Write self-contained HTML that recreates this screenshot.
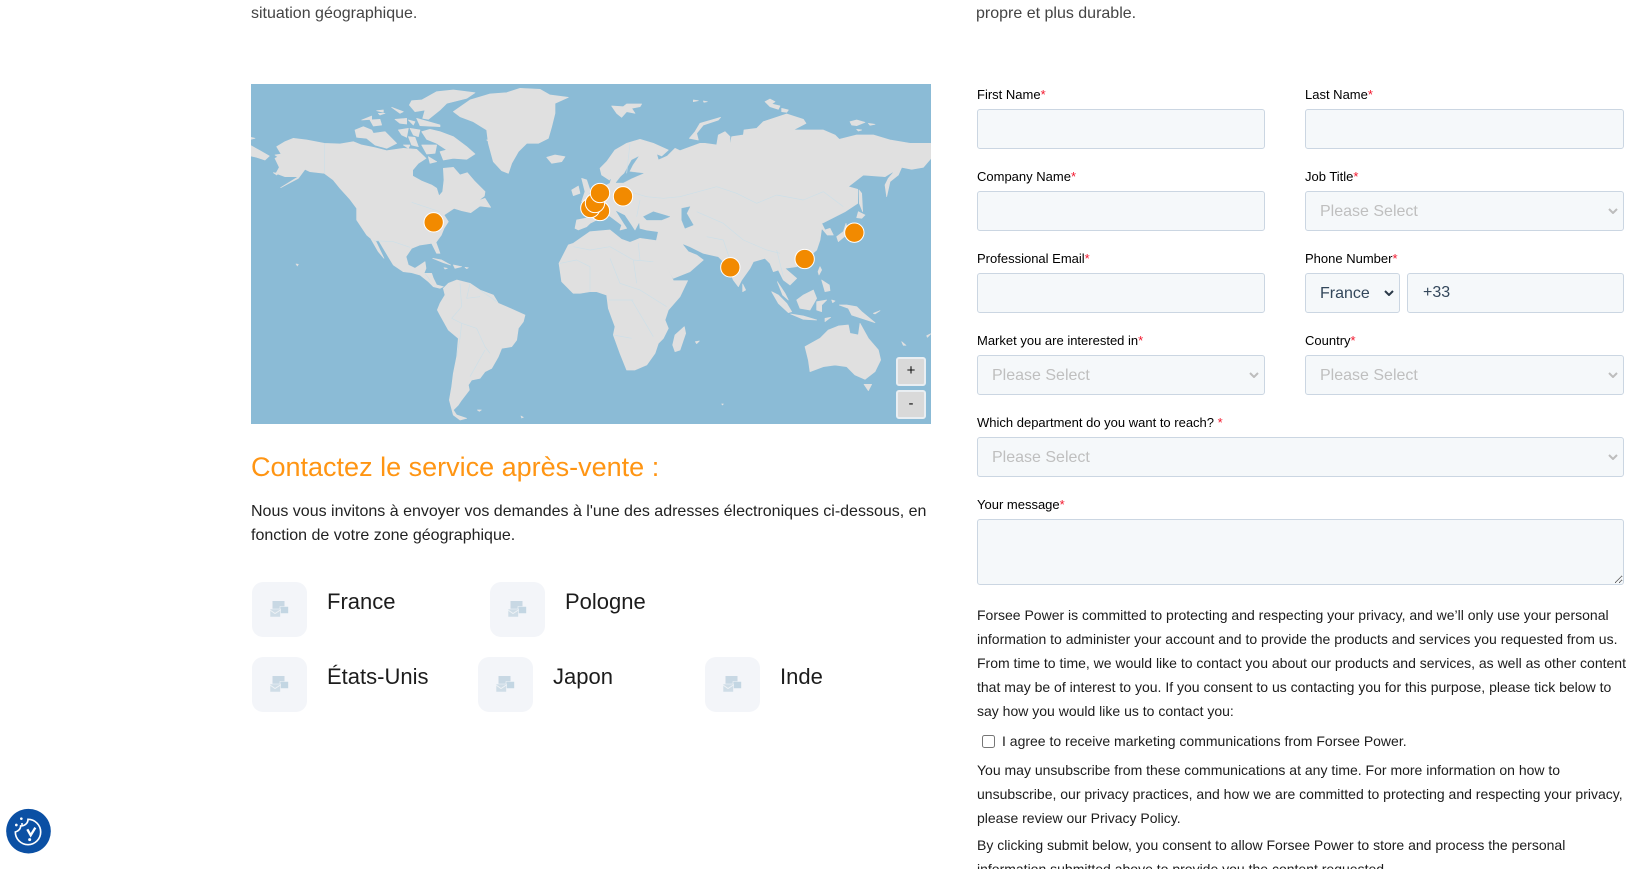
<!DOCTYPE html>
<html lang="fr">
<head>
<meta charset="utf-8">
<title>Contact</title>
<style>
html{margin:0;padding:0;background:#fff;width:1637px;height:869px;overflow:hidden}
body{margin:0;padding:0;background:#fff;position:relative;width:1637px;height:869px;overflow:hidden;font-family:"Liberation Sans",Arial,sans-serif;color:#222}
.t{position:absolute;white-space:nowrap}
.b{position:absolute;font-size:16px;line-height:24px;color:#222}
.lab{position:absolute;font-size:13px;line-height:16px;color:#000;white-space:nowrap}
.lab i{font-style:normal;color:#f2162c}
.f{position:absolute;box-sizing:border-box;height:40px;margin:0;background:#f5f8fa;border:1px solid #cbd6e2;border-radius:3px;font:16px "Liberation Sans",Arial,sans-serif;color:#33475b;padding:0 15px;outline:0}
select.f{color:#bfbfbf;padding:0 14px;-webkit-appearance:none;appearance:none}
select.dark{color:#33475b}
.ch{position:absolute;width:10px;height:6px}
.box{position:absolute;width:55px;height:55px;background:#f3f5f9;border-radius:11px}
.box svg{position:absolute;left:18px;top:19px}
.city{position:absolute;font-size:22px;line-height:28px;color:#1c1c1c;white-space:nowrap}
.p{position:absolute;left:977px;font-size:14px;line-height:24px;color:#1c1c1c;white-space:nowrap}
.zb{position:absolute;left:896px;width:30px;height:29px;box-sizing:border-box;background:#d9d9d9;border:2px solid #e9eef2;border-radius:3px;text-align:center;font-size:15px;line-height:24px;color:#111}
</style>
</head>
<body>
<div class="t" style="left:251px;top:2px;font-size:16px;line-height:24px;color:#444">situation géographique.</div>
<div class="t" style="left:976px;top:2px;font-size:16px;line-height:24px;color:#444">propre et plus durable.</div>

<svg style="position:absolute;left:240px;top:80px" width="700" height="360" viewBox="0 0 2100 1080">
<defs><clipPath id="c"><rect x="33" y="12" width="2040" height="1020"/></clipPath></defs>
<rect x="33" y="12" width="2040" height="1020" fill="#8bbbd6"/>
<g clip-path="url(#c)" fill="#e0e0e0" stroke="#e0e0e0" stroke-width="2" stroke-linejoin="round">
<!-- North America -->
<path d="M110 200L135 185L160 175L200 180L253 190L300 192L340 185L365 195L405 203L440 212L490 205L530 208L558 235L535 250L518 270L518 288L545 303L575 315L590 325L597 348L608 335L612 300L610 265L640 262L660 285L682 278L705 305L735 335L733 348L715 362L735 355L752 382L720 378L692 398L665 392L642 385L612 405L625 425L612 445L604 465L588 487L600 520L590 520L575 490L540 495L515 505L498 530L505 555L525 565L540 555L555 545L558 565L552 580L575 580L580 595L590 615L610 620L600 625L580 620L565 605L540 585L515 578L490 575L460 555L445 530L415 480L400 482L380 465L350 420L350 385L330 358L300 325L280 300L253 280L210 275L195 268L175 295L122 323L175 290L135 290L108 280L118 262L105 235L125 225Z"/>
<path d="M393 477L408 485L432 535L415 515Z"/>
<!-- Arctic Canada -->
<path d="M545 60L590 35L640 30L705 38L680 55L620 70L600 90L565 118L548 115L555 90L525 95L508 75L515 62Z"/>
<path d="M545 155L570 148L600 155L640 170L680 200L705 222L680 238L640 235L610 240L600 215L620 210L590 190L560 178Z"/>
<path d="M345 150L370 140L395 150L400 160L435 155L470 190L440 205L405 195L380 175L350 172Z"/>
<path d="M390 120L420 118L425 135L400 138ZM365 120L395 108L395 118ZM410 92L430 90L430 97ZM415 100L435 100L420 105ZM455 82L490 95L480 100ZM465 118L500 115L500 132L480 130ZM505 120L525 125L520 135ZM530 115L600 135L600 140L540 137ZM475 150L505 145L500 172L485 165ZM510 145L540 150L535 170L520 165ZM505 170L525 172L535 200L515 195ZM490 195L510 195L505 205ZM565 230L590 245L570 250ZM545 195L590 195L585 220L560 222ZM740 180L765 180L760 195ZM33 197L60 212L88 228L75 240L50 232L33 228ZM33 172L45 175L33 178ZM105 225L125 222L120 235ZM100 278L115 280L110 285Z"/>
<!-- Greenland / Iceland -->
<path d="M640 95L690 60L750 42L800 38L840 25L900 28L930 45L985 52L945 70L945 100L935 140L925 175L895 190L860 190L835 215L815 250L805 280L785 272L760 245L745 190L740 150L700 125L660 110Z"/>
<path d="M920 232L945 225L975 230L965 245L935 250Z"/>
<path d="M995 330L1015 318L1020 340L1000 347Z"/>
<path d="M1025 295L1040 300L1050 330L1045 360L1025 365L1035 335Z"/>
<!-- Caribbean -->
<path d="M578 535L605 540L632 555L610 548ZM640 555L665 560L645 565ZM612 563L622 565L615 567ZM675 562L685 563L680 566Z"/>
<!-- South America -->
<g transform="translate(0,480)">
<path d="M610 145L625 130L650 120L690 130L720 150L760 165L775 190L810 205L855 225L850 245L835 265L830 300L815 320L785 325L775 350L755 385L735 395L720 415L695 420L685 435L688 450L665 480L655 495L640 510L650 525L680 535L660 540L640 525L628 480L635 440L640 400L650 350L655 295L625 270L600 225L592 210L600 190L615 165Z"/>
<path d="M712 510L724 510L718 514ZM843 528L850 532L845 534ZM168 72L175 73L172 78Z"/>
</g>
<!-- Africa -->
<path d="M1050 455L1110 450L1145 478L1170 487L1200 475L1250 482L1245 497L1295 590L1300 602L1343 602L1320 650L1285 690L1275 720L1285 745L1270 775L1255 790L1245 820L1220 855L1185 870L1160 870L1140 820L1120 765L1125 740L1105 685L1100 645L1070 635L1050 635L1020 640L1000 640L965 605L957 550L985 495L1000 490Z"/>
<path d="M1333 740L1337 760L1320 810L1305 815L1298 795L1305 765Z"/>
<!-- Eurasia -->
<g transform="translate(1050,0)">
<path d="M-45 445L-40 420L0 412L-5 385L10 340L40 320L60 310L65 292L58 300L35 285L30 265L50 245L75 210L110 190L150 178L190 190L235 210L215 228L200 222L205 240L232 228L255 205L270 212L330 190L345 190L380 195L385 165L405 155L420 170L418 215L400 222L420 195L425 170L460 165L462 150L500 145L520 125L590 102L640 118L648 130L610 150L700 150L735 165L748 178L800 165L850 165L900 180L960 190L1023 190L1023 235L1000 262L965 268L935 262L925 285L900 305L890 350L885 315L895 295L915 272L885 290L820 285L775 320L803 328L803 370L765 395L700 428L670 440L695 430L705 450L720 445L730 465L712 465L695 445L690 480L680 510L640 545L620 560L585 565L620 595L600 615L580 600L565 570L550 575L540 550L525 535L490 545L480 565L455 600L445 620L430 600L410 555L385 530L340 520L300 500L275 490L295 515L320 525L340 540L300 575L250 595L195 500L205 455L170 450L150 445L148 425L135 450L122 430L105 405L75 390L100 430L110 445L90 450L95 435L55 405L30 415L0 430L-10 440L-35 450Z"/>
<path d="M160 410L190 395L240 410L215 420L170 420Z" fill="#8bbbd6" stroke="#8bbbd6" stroke-width="1"/>
<path d="M275 385L300 380L290 400L310 435L285 445L275 420Z" fill="#8bbbd6" stroke="#8bbbd6" stroke-width="1"/>
<path d="M103 280L125 240L145 230L128 255L118 275L160 280L125 295L100 308L78 308L92 290Z" fill="#8bbbd6" stroke="#8bbbd6" stroke-width="1"/>
<path d="M298 175L315 155L330 130L392 112L385 120L340 135L320 160L325 180Z"/>
<path d="M65 78L100 80L110 72L155 72L150 80L125 85L135 100L110 95L95 112L80 100Z"/>
<path d="M310 60L325 62L310 65ZM340 63L352 65L342 67ZM525 65L540 57L555 65L545 72L570 78L565 88L540 80ZM575 85L595 90L590 97L575 95ZM780 125L800 120L825 127L800 137L785 135ZM835 130L855 133L840 136ZM800 148L815 150L805 153Z"/>
<path d="M807 330L815 340L818 395L808 370ZM805 395L825 405L815 415L800 413ZM768 430L775 460L745 485L740 470L760 455Z"/>
</g>
<!-- Asia-Pacific -->
<g transform="translate(1050,480)">
<path d="M458 132L467 150L458 155Z"/>
<path d="M562 125L585 160L595 180L578 165Z"/>
<path d="M545 155L565 165L590 190L605 215L595 218L565 190Z"/>
<path d="M620 180L640 165L670 150L680 175L660 210L630 205Z"/>
<path d="M602 222L640 228L680 240L640 238Z"/>
<path d="M680 185L710 180L695 195L695 215L680 210Z"/>
<path d="M748 195L770 195L800 200L815 215L855 248L815 235L785 225L775 205Z"/>
<path d="M645 320L690 295L715 270L745 258L775 255L780 280L805 285L810 250L835 295L865 330L872 360L855 395L825 418L795 405L770 380L735 375L700 380L660 395L655 360Z"/>
<path d="M822 433L845 433L835 452Z"/>
<path d="M690 80L695 90L687 105L684 95ZM695 120L718 135L720 152L705 155ZM725 180L735 183L728 188ZM705 235L722 232L705 245ZM850 220L870 212L855 222ZM935 305L948 316L940 316ZM1010 287L1023 281L1012 292ZM316 305L328 303L320 311ZM395 492L400 492L398 495Z"/>
</g>
<!-- Borders -->
<g fill="none" stroke="#cddfe8" stroke-width="2">
<path d="M253 190V280M515 367L600 395M400 482L460 485L510 502M555 580L570 600"/>
<g transform="translate(0,480)">
<path d="M660 130L665 200L635 235L665 250L710 265L735 320L750 340M665 250L660 295L650 350M690 130L680 175L720 170M735 330L690 410M770 185L720 150"/>
</g>
<g transform="translate(1050,0)">
<path d="M270 350L380 320L440 340L500 370L560 345L640 360L700 335L760 380M320 395L400 430L460 480L530 510L570 520M350 470L400 480L420 540M120 190L110 280M100 330L170 350L220 355L270 350M150 360L140 410"/>
</g>
<g transform="translate(1050,480)">
<path d="M0 30L60 20L130 60L190 65M60 55L90 130L150 150L230 200M55 180L130 180M125 295L70 285M125 180L190 290M145 10L150 60M-90 70L-40 60L0 80L0 155M-50 20L0 30M560 30L580 110M130 60L140 130"/>
</g>
</g>
<!-- Markers -->
<g fill="#f28a00" stroke="#fff" stroke-width="3">
<circle cx="581" cy="427" r="29"/>
<circle cx="1149" cy="349" r="29"/>
<circle cx="1080" cy="393" r="29"/>
<circle cx="1051" cy="384" r="29"/>
<circle cx="1065" cy="369" r="29"/>
<circle cx="1080" cy="339" r="29"/>
<circle cx="1471" cy="562" r="29"/>
<circle cx="1694" cy="537" r="29"/>
<circle cx="1843" cy="458" r="29"/>
</g>
</g>
</svg>
<div class="zb" style="top:357px">+</div>
<div class="zb" style="top:390px">-</div>

<div class="t" style="left:251px;top:449px;font-size:27px;line-height:36px;color:#ff9513">Contactez le service après-vente :</div>
<div class="b" style="left:251px;top:500px;white-space:nowrap">Nous vous invitons à envoyer vos demandes à l'une des adresses électroniques ci-dessous, en<br>fonction de votre zone géographique.</div>

<div class="box" style="left:252px;top:582px"><svg width="19" height="16" viewBox="0 0 19 16"><path d="M2.5 0h12v12h-12z" fill="#c8d8e4"/><path d="M10 5.5h8.500v7H10z" fill="#c3d6e3" stroke="#f3f5f9" stroke-width=".6"/><path d="M0 8h10.500v8H0z" fill="#cfdde7" stroke="#f3f5f9" stroke-width=".6"/><path d="M0 9l5 3.500 5.500-3.500" fill="none" stroke="#eef2f6" stroke-width="1"/></svg></div>
<div class="city" style="left:327px;top:588px">France</div>
<div class="box" style="left:490px;top:582px"><svg width="19" height="16" viewBox="0 0 19 16"><path d="M2.5 0h12v12h-12z" fill="#c8d8e4"/><path d="M10 5.5h8.500v7H10z" fill="#c3d6e3" stroke="#f3f5f9" stroke-width=".6"/><path d="M0 8h10.500v8H0z" fill="#cfdde7" stroke="#f3f5f9" stroke-width=".6"/><path d="M0 9l5 3.500 5.500-3.500" fill="none" stroke="#eef2f6" stroke-width="1"/></svg></div>
<div class="city" style="left:565px;top:588px">Pologne</div>
<div class="box" style="left:252px;top:657px"><svg width="19" height="16" viewBox="0 0 19 16"><path d="M2.5 0h12v12h-12z" fill="#c8d8e4"/><path d="M10 5.5h8.500v7H10z" fill="#c3d6e3" stroke="#f3f5f9" stroke-width=".6"/><path d="M0 8h10.500v8H0z" fill="#cfdde7" stroke="#f3f5f9" stroke-width=".6"/><path d="M0 9l5 3.500 5.500-3.500" fill="none" stroke="#eef2f6" stroke-width="1"/></svg></div>
<div class="city" style="left:327px;top:663px">États-Unis</div>
<div class="box" style="left:478px;top:657px"><svg width="19" height="16" viewBox="0 0 19 16"><path d="M2.5 0h12v12h-12z" fill="#c8d8e4"/><path d="M10 5.5h8.500v7H10z" fill="#c3d6e3" stroke="#f3f5f9" stroke-width=".6"/><path d="M0 8h10.500v8H0z" fill="#cfdde7" stroke="#f3f5f9" stroke-width=".6"/><path d="M0 9l5 3.500 5.500-3.500" fill="none" stroke="#eef2f6" stroke-width="1"/></svg></div>
<div class="city" style="left:553px;top:663px">Japon</div>
<div class="box" style="left:705px;top:657px"><svg width="19" height="16" viewBox="0 0 19 16"><path d="M2.5 0h12v12h-12z" fill="#c8d8e4"/><path d="M10 5.5h8.500v7H10z" fill="#c3d6e3" stroke="#f3f5f9" stroke-width=".6"/><path d="M0 8h10.500v8H0z" fill="#cfdde7" stroke="#f3f5f9" stroke-width=".6"/><path d="M0 9l5 3.500 5.500-3.500" fill="none" stroke="#eef2f6" stroke-width="1"/></svg></div>
<div class="city" style="left:780px;top:663px">Inde</div>

<!-- Form -->
<div class="lab" style="left:977px;top:87px">First Name<i>*</i></div>
<div class="lab" style="left:1305px;top:87px">Last Name<i>*</i></div>
<input class="f" style="left:977px;top:109px;width:288px">
<input class="f" style="left:1305px;top:109px;width:319px">

<div class="lab" style="left:977px;top:169px">Company Name<i>*</i></div>
<div class="lab" style="left:1305px;top:169px">Job Title<i>*</i></div>
<input class="f" style="left:977px;top:191px;width:288px">
<select class="f" style="left:1305px;top:191px;width:319px"><option>Please Select</option></select>
<svg class="ch" style="left:1608px;top:208px" viewBox="0 0 10 6"><path d="M1 1L5 5L9 1" fill="none" stroke="#bdbdbd" stroke-width="2"/></svg>

<div class="lab" style="left:977px;top:251px">Professional Email<i>*</i></div>
<div class="lab" style="left:1305px;top:251px">Phone Number<i>*</i></div>
<input class="f" style="left:977px;top:273px;width:288px">
<select class="f dark" style="left:1305px;top:273px;width:95px"><option>France</option></select>
<svg class="ch" style="left:1384px;top:290px" viewBox="0 0 10 6"><path d="M1 1L5 5L9 1" fill="none" stroke="#2b3a48" stroke-width="2"/></svg>
<input class="f" style="left:1407px;top:273px;width:217px" value="+33">

<div class="lab" style="left:977px;top:333px">Market you are interested in<i>*</i></div>
<div class="lab" style="left:1305px;top:333px">Country<i>*</i></div>
<select class="f" style="left:977px;top:355px;width:288px"><option>Please Select</option></select>
<svg class="ch" style="left:1249px;top:372px" viewBox="0 0 10 6"><path d="M1 1L5 5L9 1" fill="none" stroke="#bdbdbd" stroke-width="2"/></svg>
<select class="f" style="left:1305px;top:355px;width:319px"><option>Please Select</option></select>
<svg class="ch" style="left:1608px;top:372px" viewBox="0 0 10 6"><path d="M1 1L5 5L9 1" fill="none" stroke="#bdbdbd" stroke-width="2"/></svg>

<div class="lab" style="left:977px;top:415px">Which department do you want to reach? <i>*</i></div>
<select class="f" style="left:977px;top:437px;width:647px"><option>Please Select</option></select>
<svg class="ch" style="left:1608px;top:454px" viewBox="0 0 10 6"><path d="M1 1L5 5L9 1" fill="none" stroke="#bdbdbd" stroke-width="2"/></svg>

<div class="lab" style="left:977px;top:497px">Your message<i>*</i></div>
<textarea class="f" style="left:977px;top:519px;width:647px;height:66px"></textarea>

<div class="p" style="top:603px">Forsee Power is committed to protecting and respecting your privacy, and we’ll only use your personal<br>information to administer your account and to provide the products and services you requested from us.<br>From time to time, we would like to contact you about our products and services, as well as other content<br>that may be of interest to you. If you consent to us contacting you for this purpose, please tick below to<br>say how you would like us to contact you:</div>
<input type="checkbox" style="position:absolute;left:982px;top:735px;margin:0;width:13px;height:13px">
<div class="p" style="left:1002px;top:729px">I agree to receive marketing communications from Forsee Power.</div>
<div class="p" style="top:758px">You may unsubscribe from these communications at any time. For more information on how to<br>unsubscribe, our privacy practices, and how we are committed to protecting and respecting your privacy,<br>please review our Privacy Policy.</div>
<div class="p" style="top:833px">By clicking submit below, you consent to allow Forsee Power to store and process the personal<br>information submitted above to provide you the content requested.</div>

<!-- Cookie button -->
<svg style="position:absolute;left:0;top:800px" width="70" height="69" viewBox="0 0 210 207">
<circle cx="85.5" cy="93.5" r="67" fill="#0b50a4"/>
<path d="M84 58A38 38 0 1 1 46 96C58 92 62 86 62 78C74 78 84 70 84 58Z" fill="none" stroke="#fff" stroke-width="5"/>
<path d="M82 88L92 106L106 83" fill="none" stroke="#fff" stroke-width="7"/>
<circle cx="89" cy="119" r="4.5" fill="#fff"/>
<circle cx="64" cy="56" r="4" fill="#fff"/>
<circle cx="49" cy="75" r="4" fill="#fff"/>
<circle cx="66" cy="72" r="3" fill="#fff"/>
</svg>
</body>
</html>
